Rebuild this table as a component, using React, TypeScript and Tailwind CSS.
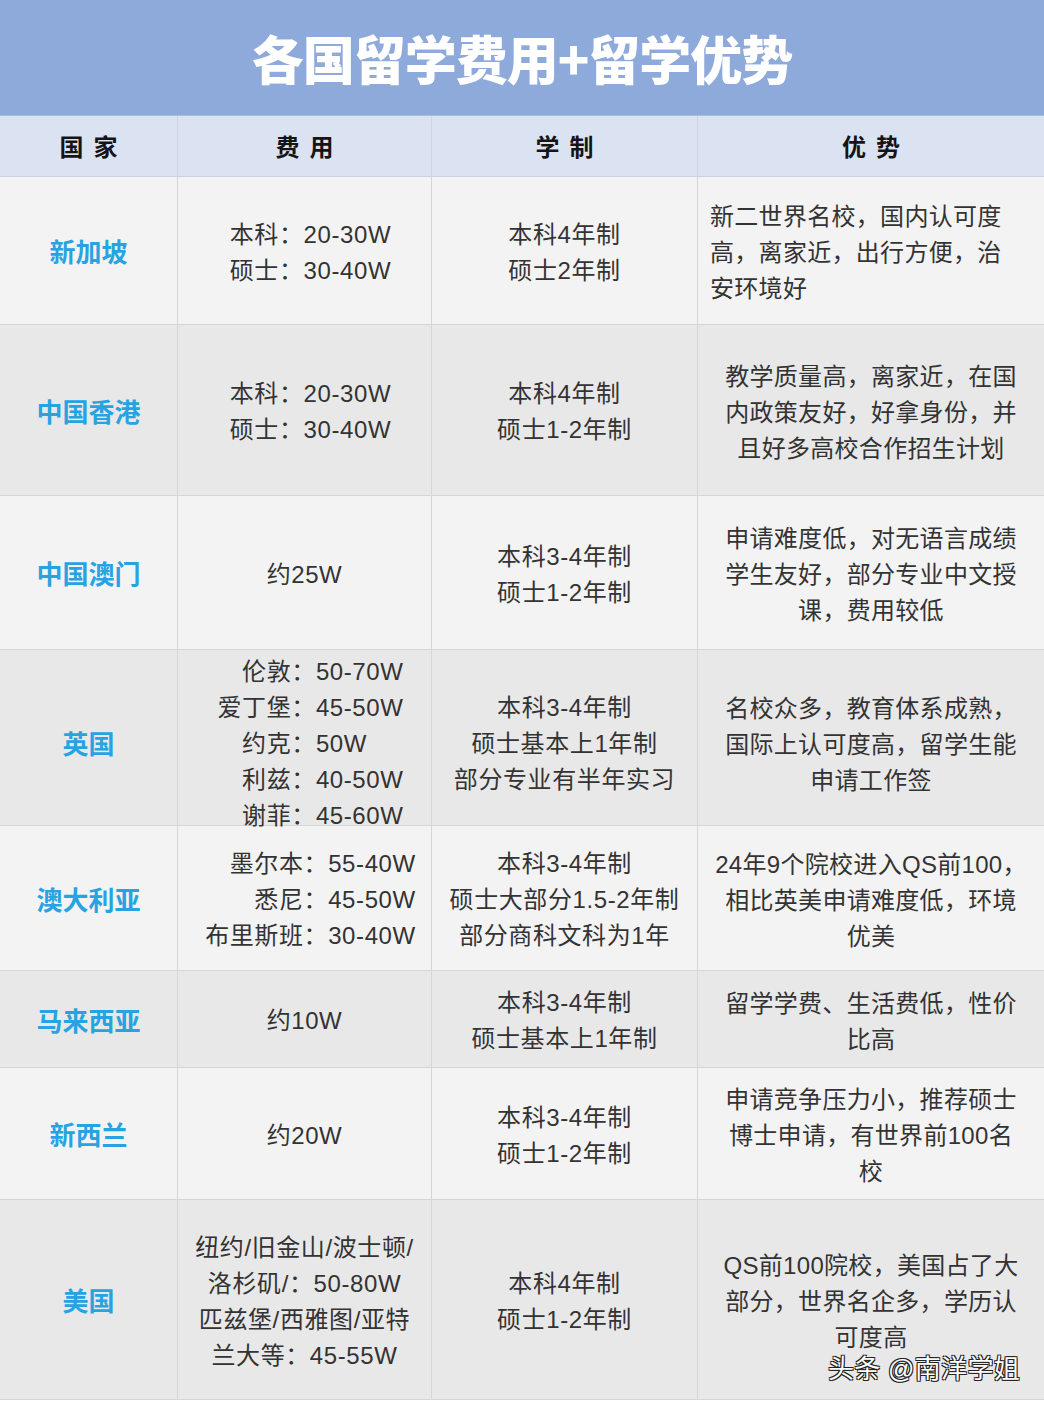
import React from "react";

type Row = {
  country: string;
  height: number;
  dark: boolean;
  fee: { label?: string; value: string }[];
  feeGrid: boolean;
  system: string[];
  merit: string[];
  meritLeft?: boolean;
};

const rows: Row[] = [
  {
    country: "新加坡",
    height: 148,
    dark: false,
    feeGrid: true,
    fee: [
      { label: "本科：", value: "20-30W" },
      { label: "硕士：", value: "30-40W" },
    ],
    system: ["本科4年制", "硕士2年制"],
    merit: ["新二世界名校，国内认可度", "高，离家近，出行方便，治", "安环境好"],
    meritLeft: true,
  },
  {
    country: "中国香港",
    height: 171,
    dark: true,
    feeGrid: true,
    fee: [
      { label: "本科：", value: "20-30W" },
      { label: "硕士：", value: "30-40W" },
    ],
    system: ["本科4年制", "硕士1-2年制"],
    merit: ["教学质量高，离家近，在国", "内政策友好，好拿身份，并", "且好多高校合作招生计划"],
  },
  {
    country: "中国澳门",
    height: 154,
    dark: false,
    feeGrid: false,
    fee: [{ value: "约25W" }],
    system: ["本科3-4年制", "硕士1-2年制"],
    merit: ["申请难度低，对无语言成绩", "学生友好，部分专业中文授", "课，费用较低"],
  },
  {
    country: "英国",
    height: 176,
    dark: true,
    feeGrid: true,
    fee: [
      { label: "伦敦：", value: "50-70W" },
      { label: "爱丁堡：", value: "45-50W" },
      { label: "约克：", value: "50W" },
      { label: "利兹：", value: "40-50W" },
      { label: "谢菲：", value: "45-60W" },
    ],
    system: ["本科3-4年制", "硕士基本上1年制", "部分专业有半年实习"],
    merit: ["名校众多，教育体系成熟，", "国际上认可度高，留学生能", "申请工作签"],
  },
  {
    country: "澳大利亚",
    height: 145,
    dark: false,
    feeGrid: true,
    fee: [
      { label: "墨尔本：", value: "55-40W" },
      { label: "悉尼：", value: "45-50W" },
      { label: "布里斯班：", value: "30-40W" },
    ],
    system: ["本科3-4年制", "硕士大部分1.5-2年制", "部分商科文科为1年"],
    merit: ["24年9个院校进入QS前100，", "相比英美申请难度低，环境", "优美"],
  },
  {
    country: "马来西亚",
    height: 97,
    dark: true,
    feeGrid: false,
    fee: [{ value: "约10W" }],
    system: ["本科3-4年制", "硕士基本上1年制"],
    merit: ["留学学费、生活费低，性价", "比高"],
  },
  {
    country: "新西兰",
    height: 132,
    dark: false,
    feeGrid: false,
    fee: [{ value: "约20W" }],
    system: ["本科3-4年制", "硕士1-2年制"],
    merit: ["申请竞争压力小，推荐硕士", "博士申请，有世界前100名", "校"],
  },
  {
    country: "美国",
    height: 200,
    dark: true,
    feeGrid: false,
    fee: [
      { value: "纽约/旧金山/波士顿/" },
      { value: "洛杉矶/：50-80W" },
      { value: "匹兹堡/西雅图/亚特" },
      { value: "兰大等：45-55W" },
    ],
    system: ["本科4年制", "硕士1-2年制"],
    merit: ["QS前100院校，美国占了大", "部分，世界名企多，学历认", "可度高"],
  },
];

const font = { fontFamily: '"Noto Sans CJK SC", "Noto Sans", sans-serif' };
const body = { fontFamily: '"Liberation Sans", "Noto Sans CJK SC", sans-serif' };

export default function App() {
  return (
    <div className="w-[1044px] h-[1404px] bg-white text-[#333]" style={font}>
      {/* Title */}
      <div className="h-[116px] bg-[#8eaadb] flex items-center justify-center border-b border-[#a9bde3]">
        <h1 className="text-[52px] font-black text-white tracking-[-1px] leading-none">
          各国留学费用+留学优势
        </h1>
      </div>

      {/* Header */}
      <div className="grid grid-cols-[178px_254px_266px_346px] h-[61px] bg-[#dbe3f3] border-b border-[#ccd3df]">
        {["国家", "费用", "学制", "优势"].map((h, i) => (
          <div
            key={h}
            className={`flex items-center justify-center text-[24px] font-bold text-[#151515] tracking-[10px] pl-[10px] ${
              i < 3 ? "border-r border-[#cfd6e2]" : ""
            }`}
          >
            {h}
          </div>
        ))}
      </div>

      {/* Body */}
      {rows.map((r, idx) => (
        <div
          key={r.country}
          className={`grid grid-cols-[178px_254px_266px_346px] border-b border-[#d6d6d6] ${
            r.dark ? "bg-[#e8e8e9]" : "bg-[#f3f3f4]"
          }`}
          style={{ height: r.height }}
        >
          <div className="flex items-center justify-center border-r border-[#d6d6d6] text-[26px] font-bold text-[#27a3e1]">
            {r.country}
          </div>

          <div
            className="flex items-center justify-center pt-[4px] border-r border-[#d6d6d6] text-[24px] leading-[36px] tracking-[0.6px] whitespace-nowrap"
            style={body}
          >
            {r.feeGrid ? (
              <div className="grid grid-cols-[auto_auto] pl-[12px]">
                {r.fee.map((f) => (
                  <React.Fragment key={f.label}>
                    <span className="text-right">{f.label}</span>
                    <span>{f.value}</span>
                  </React.Fragment>
                ))}
              </div>
            ) : (
              <div className="flex flex-col items-center">
                {r.fee.map((f) => (
                  <span key={f.value}>{f.value}</span>
                ))}
              </div>
            )}
          </div>

          <div
            className="flex flex-col items-center justify-center pt-[4px] border-r border-[#d6d6d6] text-[24px] leading-[36px] tracking-[0.6px] whitespace-nowrap"
            style={body}
          >
            {r.system.map((s) => (
              <span key={s}>{s}</span>
            ))}
          </div>

          <div
            className={`relative flex flex-col justify-center pt-[5px] text-[24px] leading-[36px] tracking-[0.3px] whitespace-nowrap ${
              r.meritLeft ? "items-start pl-[12px]" : "items-center"
            }`}
            style={body}
          >
            {r.merit.map((m) => (
              <span key={m}>{m}</span>
            ))}
            {idx === rows.length - 1 && (
              <span
                className="absolute left-[130px] bottom-[17px] text-[26px] leading-none text-white"
                style={{
                  textShadow:
                    "1px 1px 0 #222, -1px -1px 0 #222, 1px -1px 0 #222, -1px 1px 0 #222",
                }}
              >
                头条 @南洋学姐
              </span>
            )}
          </div>
        </div>
      ))}
    </div>
  );
}
